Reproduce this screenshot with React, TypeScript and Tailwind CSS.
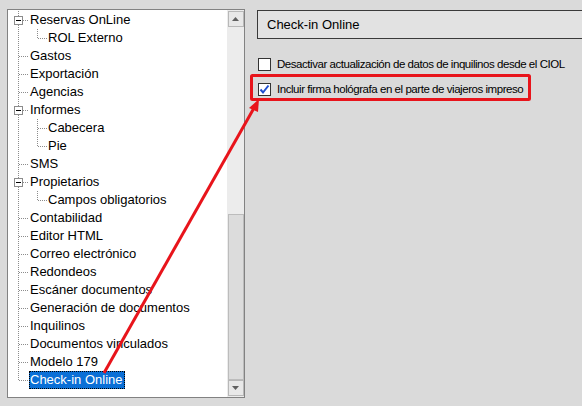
import React from 'react';

type Node = { label: string; level: 0 | 1; expanded?: boolean; lastChild?: boolean };

const nodes: Node[] = [
  { label: 'Reservas OnLine', level: 0, expanded: true },
  { label: 'ROL Externo', level: 1, lastChild: true },
  { label: 'Gastos', level: 0 },
  { label: 'Exportación', level: 0 },
  { label: 'Agencias', level: 0 },
  { label: 'Informes', level: 0, expanded: true },
  { label: 'Cabecera', level: 1 },
  { label: 'Pie', level: 1, lastChild: true },
  { label: 'SMS', level: 0 },
  { label: 'Propietarios', level: 0, expanded: true },
  { label: 'Campos obligatorios', level: 1, lastChild: true },
  { label: 'Contabilidad', level: 0 },
  { label: 'Editor HTML', level: 0 },
  { label: 'Correo electrónico', level: 0 },
  { label: 'Redondeos', level: 0 },
  { label: 'Escáner documentos', level: 0 },
  { label: 'Generación de documentos', level: 0 },
  { label: 'Inquilinos', level: 0 },
  { label: 'Documentos vinculados', level: 0 },
  { label: 'Modelo 179', level: 0 },
  { label: 'Check-in Online', level: 0 },
];

const dot = { stroke: '#8c8c8c', strokeWidth: 1, strokeDasharray: '1 1', shapeRendering: 'crispEdges' as const };

// tree connector lines drawn per row
const Connector: React.FC<{ node: Node; last: boolean }> = ({ node, last }) => {
  const w = node.level === 0 ? 21 : 39;
  return (
    <svg width={w} height={18} className="shrink-0">
      {node.expanded ? (
        <>
          <line x1={10.5} y1={0} x2={10.5} y2={5} {...dot} />
          <line x1={10.5} y1={14} x2={10.5} y2={18} {...dot} />
          <rect x={6.5} y={5.5} width={8} height={8} fill="#fff" stroke="#8c8c8c" shapeRendering="crispEdges" />
          <line x1={8} y1={9.5} x2={13} y2={9.5} stroke="#000" shapeRendering="crispEdges" />
          <line x1={15} y1={9.5} x2={21} y2={9.5} {...dot} />
        </>
      ) : node.level === 0 ? (
        <>
          <line x1={10.5} y1={0} x2={10.5} y2={last ? 10 : 18} {...dot} />
          <line x1={11} y1={9.5} x2={21} y2={9.5} {...dot} />
        </>
      ) : (
        <>
          <line x1={10.5} y1={0} x2={10.5} y2={18} {...dot} />
          <line x1={29.5} y1={0} x2={29.5} y2={node.lastChild ? 10 : 18} {...dot} />
          <line x1={30} y1={9.5} x2={39} y2={9.5} {...dot} />
        </>
      )}
    </svg>
  );
};

const Arrow: React.FC<{ up: boolean }> = ({ up }) => (
  <div className="h-[16px] w-[16px] shrink-0 mx-auto bg-[#e8e8e8] border border-[#b8b8b8] flex items-center justify-center">
    <svg width={7} height={4}>
      <polygon points={up ? '0,4 3.5,0 7,4' : '0,0 3.5,4 7,0'} fill="#606060" />
    </svg>
  </div>
);

const Checkbox: React.FC<{ checked?: boolean }> = ({ checked }) => (
  <div className="w-[13px] h-[13px] border border-[#333] bg-white flex items-center justify-center shrink-0">
    {checked && (
      <svg width={11} height={11} viewBox="0 0 11 11">
        <path d="M1.5 5.5 L4 8.5 L9.5 1.5" fill="none" stroke="#1f4fd0" strokeWidth={2} />
      </svg>
    )}
  </div>
);

export default function App() {
  return (
    <div
      className="relative w-[582px] h-[406px] overflow-hidden bg-[#dadada] text-black flex items-start"
      style={{ fontFamily: '"Liberation Sans", Arial, sans-serif' }}
    >
      {/* tree panel */}
      <div className="ml-[7px] mt-[9px] w-[238px] h-[389px] shrink-0 border border-[#828282] bg-white flex">
        <div className="flex-1 pt-[1px] text-[13px] leading-[18px]">
          {nodes.map((n, i) => {
            const last = i === nodes.length - 1;
            return (
              <div key={n.label} className="flex h-[18px] items-center">
                <Connector node={n} last={last} />
                {last ? (
                  <span className="h-[18px] pl-[1px] pr-[2px] bg-[#0a6fd6] text-white outline outline-1 outline-dotted outline-black -outline-offset-1">
                    {n.label}
                  </span>
                ) : (
                  <span className="pl-[1px] whitespace-nowrap">{n.label}</span>
                )}
              </div>
            );
          })}
        </div>
        <div className="w-[17px] shrink-0 bg-[#ececec] flex flex-col pt-[1px] pb-[1px]">
          <Arrow up />
          <div className="flex-1 flex flex-col justify-end">
            <div className="h-[166px] w-[16px] mx-auto bg-[#dcdcdc] border border-[#bcbcbc]" />
          </div>
          <Arrow up={false} />
        </div>
      </div>

      {/* settings panel */}
      <div className="ml-[12px] mt-[10px] shrink-0 flex flex-col">
        <div className="w-[340px] h-[29px] border border-[#3a3a3a] bg-[#e2e2e2] flex items-center pl-[9px] text-[13px]">
          Check-in Online
        </div>
        <div className="mt-[19px] ml-[1px] flex flex-col gap-[12px] text-[11.5px] tracking-[-0.45px]">
          <div className="flex items-center gap-[6px] h-[13px]">
            <Checkbox />
            <span className="whitespace-nowrap">Desactivar actualización de datos de inquilinos desde el CIOL</span>
          </div>
          <div className="flex items-center gap-[6px] h-[13px]">
            <Checkbox checked />
            <span className="whitespace-nowrap">Incluir firma hológrafa en el parte de viajeros impreso</span>
          </div>
        </div>
      </div>

      {/* annotation */}
      <svg className="absolute inset-0 pointer-events-none" width={582} height={406}>
        <rect x={251.5} y={75.5} width={278} height={24} rx={1} fill="none" stroke="#e8141b" strokeWidth={3} />
        <line x1={104} y1={373} x2={254} y2={108} stroke="#e8141b" strokeWidth={3} />
        <polygon points="259,99 249,108 258,112" fill="#e8141b" />
      </svg>
    </div>
  );
}
